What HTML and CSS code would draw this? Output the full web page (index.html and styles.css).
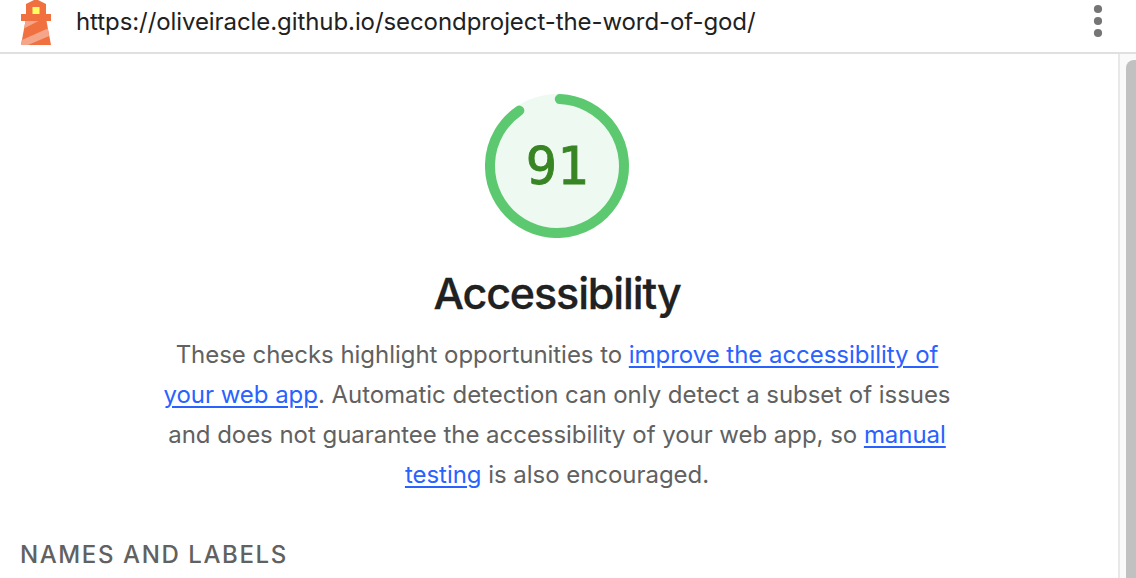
FILE: index.html
```html
<!DOCTYPE html>
<html lang="en">
<head>
<meta charset="utf-8">
<title>Accessibility report</title>
<link rel="stylesheet" href="styles.css">
</head>
<body>
<header class="topbar">
  <svg class="logo" width="30" height="46" viewBox="0 0 30 46">
    <path fill="#f07040" d="M5 14V4L13 0V-1H17V0L25 4V14H30V21H25.500L30 45H0L4.500 21H0V14Z"/>
    <path fill="#f4a58a" d="M4.500 21H17.500L3 28.500ZM26.700 28.500L28.200 36L7 45H0L.8 40Z"/>
    <path fill="#ffff63" d="M11.500 7H18.500V14H11.500Z"/>
  </svg>
  <span class="url">https://oliveiracle.github.io/secondproject-the-word-of-god/</span>
  <svg class="menu" width="10" height="34" viewBox="0 0 10 34" fill="#757575">
    <circle cx="5" cy="5" r="4.100"/><circle cx="5" cy="17" r="4.100"/><circle cx="5" cy="29" r="4.100"/>
  </svg>
</header>
<div class="viewport">
  <main class="report">
    <svg class="gauge" width="144" height="144" viewBox="0 0 144 144">
      <circle cx="72" cy="72" r="72" fill="#eef9f1"/>
      <path d="M74.800 5.060A67 67 0 1 1 34.300 16.600" fill="none" stroke="#5cc970" stroke-width="10" stroke-linecap="round"/>
      <text class="score" x="72" y="90" text-anchor="middle">91</text>
    </svg>
    <h1 class="title">Accessibility</h1>
    <p class="description">
      <span class="line">These checks highlight opportunities to <a class="link">improve the accessibility of</a></span>
      <span class="line"><a class="link">your web app</a>. Automatic detection can only detect a subset of issues</span>
      <span class="line">and does not guarantee the accessibility of your web app, so <a class="link">manual</a></span>
      <span class="line"><a class="link">testing</a> is also encouraged.</span>
    </p>
    <h2 class="group">NAMES AND LABELS</h2>
  </main>
  <div class="scrollbar"><div class="thumb"></div></div>
</div>
</body>
</html>
```
FILE: styles.css
```css
* { box-sizing: border-box; }
body {
  margin: 0;
  height: 578px;
  overflow: hidden;
  display: flex;
  flex-direction: column;
  background: #fff;
  color: #212121;
  font-family: Inter, "Liberation Sans", sans-serif;
}
.topbar {
  display: flex;
  flex: none;
  height: 54px;
  padding: 0 33px 0 21px;
  border-bottom: 2px solid #e0e0e0;
}
.logo { flex: none; }
.url {
  margin-left: 25px;
  font-size: 24px;
  line-height: 43px;
  letter-spacing: -0.08px;
  white-space: nowrap;
}
.menu { margin: 4px 0 0 auto; }
.viewport { display: flex; flex: 1; min-height: 0; }
.report {
  width: 1118px;
  padding: 40px 4px 0 0;
  display: flex;
  flex-direction: column;
  align-items: center;
}
.gauge { flex: none; }
.score {
  font-family: "DejaVu Sans Mono", monospace;
  font-size: 52px;
  fill: #388523;
  stroke: #388523;
  stroke-width: 0.9px;
}
.title {
  margin: 27px 0 0;
  font-size: 43px;
  line-height: 56px;
  font-weight: 500;
  letter-spacing: -1.1px;
  -webkit-text-stroke: 0.3px #212121;
}
.description {
  margin: 14px 0 0;
  color: #616161;
  font-size: 24px;
  line-height: 40px;
  letter-spacing: -0.04px;
  text-align: center;
}
.line { display: block; white-space: nowrap; }
.link {
  color: #2962ff;
  text-decoration: underline;
  text-decoration-thickness: 2px;
  text-underline-offset: 3px;
}
.group {
  align-self: flex-start;
  margin: 40px 0 0 20px;
  height: 33px;
  color: #616161;
  font-size: 24px;
  line-height: 40px;
  font-weight: 500;
  letter-spacing: 1.6px;
}
.scrollbar {
  width: 18px;
  padding: 6px 0 0 6px;
  border-left: 2px solid #e8e8e8;
  background: #fafafa;
  overflow: hidden;
}
.thumb {
  width: 10px;
  height: 100%;
  border-radius: 8px 0 0 0;
  background: #c1c1c1;
}
```
